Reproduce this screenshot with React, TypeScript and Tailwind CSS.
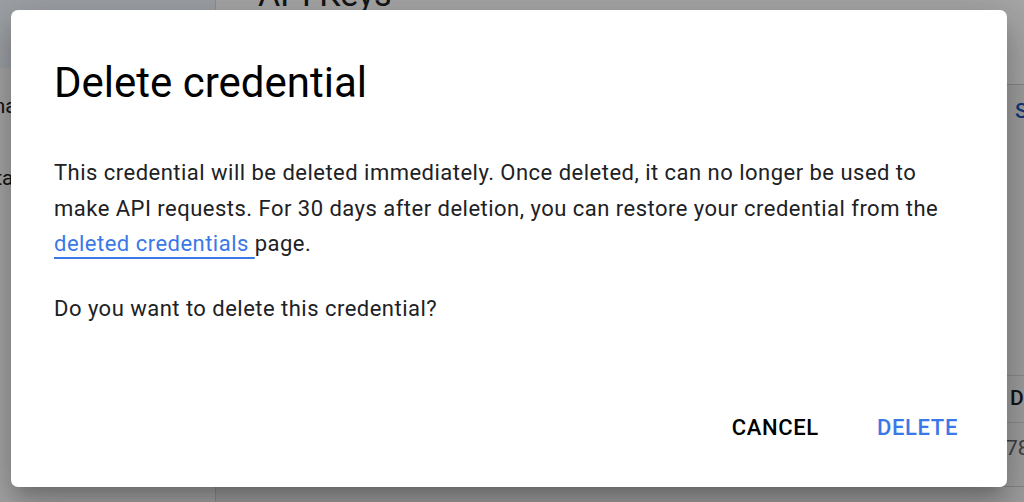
import React from 'react';

const font = { fontFamily: 'Roboto, "Liberation Sans", Arial, sans-serif' };

const BackgroundPage = () => (
    <div className="flex h-[502px] w-[1024px] overflow-hidden bg-white text-[#202124]">
        {/* Sidebar */}
        <div className="w-[216px] shrink-0 border-r border-[#dadce0] flex flex-col">
            <div className="h-[68px] bg-[#f2f6fd]" />
            <div className="mt-[24px] -ml-[36px] text-[21px] leading-[28px] whitespace-nowrap">Manager</div>
            <div className="mt-[44px] -ml-[30px] text-[21px] leading-[28px] whitespace-nowrap">Data</div>
        </div>

        {/* Main */}
        <div className="flex-1 flex flex-col min-w-0">
            <div className="h-[85px] border-b border-[#d0d0d0] pl-[42px]">
                <div className="-mt-[26px] text-[34px] leading-[40px] whitespace-nowrap">API Keys</div>
            </div>
            <div className="bg-[#f4f4f4] flex-1 flex flex-col">
                <div className="pl-[799px] pt-[12px] text-[21px] leading-[28px] font-medium text-[#1a55b8] whitespace-nowrap">SHOW</div>
                <div className="mt-[250px] h-[48px] border-y border-[#d6d6d6] pl-[794px] flex items-center text-[21px] font-medium whitespace-nowrap">Date</div>
                <div className="h-[52px] pl-[790px] flex items-center text-[21px] text-[#5f6368] whitespace-nowrap">78</div>
                <div className="ml-[156px] w-[74px] h-[3px] bg-[#673ab7]" />
                <div className="mt-[8px] ml-[42px] border-t border-[#cfcfcf]" />
            </div>
        </div>
    </div>
);

const App = () => {
    return (
        <div className="relative h-[502px] w-[1024px] overflow-hidden" style={font}>
            <BackgroundPage />

            {/* Scrim + dialog */}
            <div className="absolute inset-0 bg-[rgba(0,0,0,0.35)] pl-[11px] pt-[10px]">
                <div className="w-[996px] h-[477px] bg-white rounded-[7px] flex flex-col shadow-[0_11px_15px_-7px_rgba(0,0,0,0.2),0_24px_38px_3px_rgba(0,0,0,0.14),0_9px_46px_8px_rgba(0,0,0,0.12)]">
                    <h2 className="pt-[47px] px-[43px] text-[42px] leading-[52px] font-normal text-black">
                        Delete credential
                    </h2>

                    <div className="mt-[46px] pl-[43px] pr-[40px] text-[22px] leading-[35.5px] tracking-[0.48px] text-[#202124]">
                        <p>
                            This credential will be deleted immediately. Once deleted, it can no longer be used to make API
                            requests. For 30 days after deletion, you can restore your credential from the{' '}
                            <a href="#" className="text-[#3b78e7] underline decoration-[1.5px] underline-offset-[6px]">deleted credentials </a>
                            page.
                        </p>
                        <p className="mt-[29px]">Do you want to delete this credential?</p>
                    </div>

                    <div className="mt-auto pb-[33px] pr-[33px] flex justify-end gap-[26px]">
                        <button className="px-4 py-2 text-[22px] leading-[36px] font-medium text-black tracking-[0.03em]">
                            CANCEL
                        </button>
                        <button className="px-4 py-2 text-[22px] leading-[36px] font-medium text-[#3b78e7] tracking-[0.03em]">
                            DELETE
                        </button>
                    </div>
                </div>
            </div>
        </div>
    );
};

export default App;
